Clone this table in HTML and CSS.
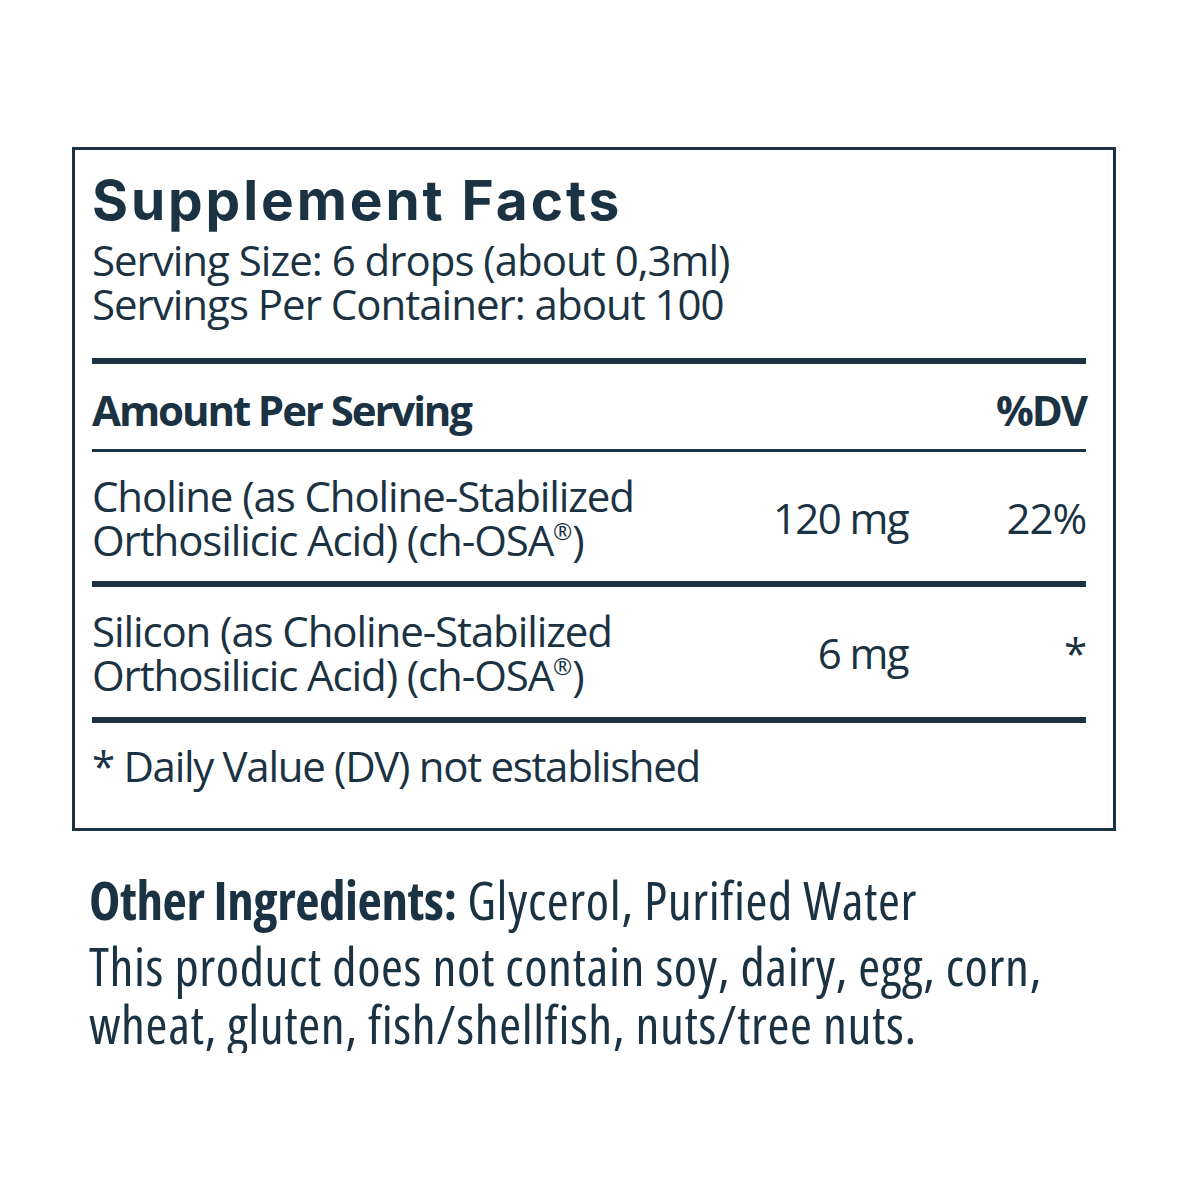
FILE: index.html
```html
<!DOCTYPE html>
<html lang="en">
<head>
<meta charset="utf-8">
<title>Supplement Facts</title>
<link rel="stylesheet" href="styles.css">
</head>
<body>
<main class="page">
  <section class="panel">
    <h1 class="title">Supplement Facts</h1>
    <p class="serving">Serving Size: 6 drops (about 0,3ml)<br>Servings Per Container: about 100</p>
    <div class="row head">
      <span class="name">Amount Per Serving</span>
      <span class="dv">%DV</span>
    </div>
    <div class="row item first">
      <span class="name">Choline (as Choline-Stabilized<br>Orthosilicic Acid) (ch-OSA<sup class="reg">®</sup>)</span>
      <span class="amt">120 mg</span>
      <span class="dv">22%</span>
    </div>
    <div class="row item">
      <span class="name">Silicon (as Choline-Stabilized<br>Orthosilicic Acid) (ch-OSA<sup class="reg">®</sup>)</span>
      <span class="amt">6 mg</span>
      <span class="dv">*</span>
    </div>
    <p class="note">* Daily Value (DV) not established</p>
  </section>
  <section class="other">
    <p class="ingredients"><strong>Other Ingredients:</strong> Glycerol, Purified Water</p>
    <p class="allergens">This product does not contain soy, dairy, egg, corn,<br>wheat, gluten, fish/shellfish, nuts/tree nuts.</p>
  </section>
</main>
</body>
</html>
```
FILE: styles.css
```css
* {
  box-sizing: border-box;
  margin: 0;
  padding: 0;
}

body {
  background: #ffffff;
  color: #1b3243;
  font-family: "Open Sans", "DejaVu Sans", sans-serif;
}

.page {
  padding: 147px 0 0 72px;
}

.panel {
  width: 1044px;
  border: 3px solid #1b3243;
  padding: 20px 27px 40px 17px;
}

.title {
  font-family: "Inter", "Lato", sans-serif;
  font-weight: 700;
  font-size: 55px;
  line-height: 60px;
  letter-spacing: 2.9px;
}

.serving {
  margin-top: 8px;
  margin-bottom: 32px;
  font-size: 42px;
  line-height: 44px;
  letter-spacing: -1px;
}

.row {
  display: grid;
  grid-template-columns: 1fr 220px 178px;
  align-items: center;
  font-size: 42px;
  line-height: 44px;
  letter-spacing: -1.1px;
}

.row .amt,
.row .dv {
  text-align: right;
}

.row .amt {
  letter-spacing: -1.6px;
}

.head {
  border-top: 6px solid #1b3243;
  padding: 24px 0 17px;
  font-weight: 700;
  letter-spacing: -2.1px;
}

.head .name {
  grid-column: 1 / 3;
}

.item {
  border-top: 6px solid #1b3243;
  padding: 22px 0 20px;
}

.item.first {
  border-top-width: 3px;
  padding-bottom: 19px;
}

.reg {
  font-size: 0.55em;
  line-height: 0;
  vertical-align: 0.7em;
  letter-spacing: 0;
}

.note {
  border-top: 6px solid #1b3243;
  padding-top: 21px;
  font-size: 42px;
  line-height: 44px;
  letter-spacing: -1.3px;
}

.other {
  margin: 38px 0 0 17px;
  font-size: 53px;
  font-stretch: 75%;
  letter-spacing: 0.6px;
}

.ingredients {
  line-height: 62px;
}

.ingredients strong {
  font-weight: 700;
  letter-spacing: -0.4px;
}

.allergens {
  margin-top: 6px;
  line-height: 58px;
}
```
